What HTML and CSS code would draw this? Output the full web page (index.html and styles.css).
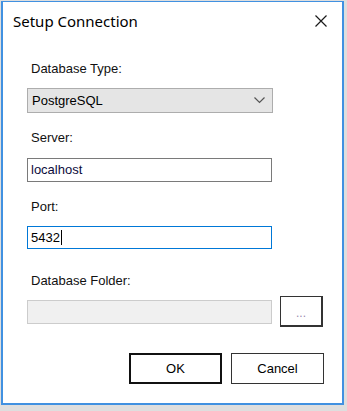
FILE: index.html
```html
<!DOCTYPE html>
<html lang="en">

<head>
    <meta charset="UTF-8">
    <title>Setup Connection</title>
    <link rel="stylesheet" href="styles.css">
</head>

<body>
    <div class="window">
        <div class="titlebar">
            <div class="title">Setup Connection</div>
            <svg class="close" width="12" height="12" viewBox="0 0 12 12">
                <path d="M0.5 0.5 L11.5 11.5 M11.5 0.5 L0.5 11.5" stroke="#1a1a1a" stroke-width="1.2" fill="none"/>
            </svg>
        </div>

        <div class="form">
            <label class="label first">Database Type:</label>
            <div class="combo">
                <span>PostgreSQL</span>
                <svg width="11" height="7" viewBox="0 0 11 7">
                    <path d="M0.5 0.5 L5.5 5.5 L10.5 0.5" stroke="#555" stroke-width="1.2" fill="none"/>
                </svg>
            </div>

            <label class="label">Server:</label>
            <div class="textbox server">localhost</div>

            <label class="label">Port:</label>
            <div class="textbox port">5432<span class="caret"></span></div>

            <label class="label folder-label">Database Folder:</label>
            <div class="folder-row">
                <div class="textbox disabled"></div>
                <button class="browse">...</button>
            </div>

            <div class="actions">
                <button class="button default">OK</button>
                <button class="button">Cancel</button>
            </div>
        </div>
    </div>
</body>

</html>
```

FILE: styles.css
```css
body {
    margin: 0;
    padding: 1px 0 0 1px;
    background-color: #dedede;
    font-family: 'Liberation Sans', Arial, sans-serif;
    font-size: 13px;
    color: #000000;
}

.window {
    width: 339px;
    height: 401px;
    background-color: #ffffff;
    border: 2px solid #4191e1;
    border-top-width: 1px;
}

.titlebar {
    height: 38px;
    display: flex;
    align-items: center;
    justify-content: space-between;
    padding: 0 15px 0 10px;
}

.title {
    font-family: 'Noto Sans', sans-serif;
    font-size: 15px;
    color: #000000;
}

.form {
    display: flex;
    flex-direction: column;
    padding-left: 24px;
}

.label {
    display: block;
    height: 16px;
    line-height: 16px;
    margin-top: 17px;
    padding-left: 4px;
    color: #111111;
}

.label.first {
    margin-top: 21px;
}

.combo {
    height: 23px;
    margin-top: 11px;
    background-color: #e5e5e5;
    border: 1px solid #adadad;
    display: flex;
    align-items: center;
    justify-content: space-between;
    padding: 0 7px 0 4px;
    width: 233px;
}

.textbox {
    width: 240px;
    height: 22px;
    line-height: 22px;
    border: 1px solid #7a7a7a;
    padding-left: 3px;
    color: #0b0b3b;
}

.server {
    margin-top: 12px;
}

.port {
    margin-top: 11px;
    height: 21px;
    line-height: 21px;
    border-color: #0078d7;
    display: flex;
    align-items: center;
    color: #000000;
}

.caret {
    display: inline-block;
    width: 1px;
    height: 15px;
    background-color: #000000;
    margin-left: 1px;
}

.folder-label {
    margin-top: 24px;
}

.folder-row {
    display: flex;
    align-items: center;
    gap: 8px;
    margin-top: 7px;
}

.textbox.disabled {
    background-color: #f0f0f0;
    border-color: #cccccc;
}

.browse {
    width: 43px;
    height: 31px;
    background-color: #ffffff;
    border: 2px solid #333333;
    border-left-width: 1px;
    border-top-width: 1px;
    font-family: 'Liberation Sans', sans-serif;
    font-size: 12px;
    color: #9a8ab0;
    padding: 4px 0 0 0;
}

.actions {
    display: flex;
    justify-content: flex-end;
    gap: 9px;
    margin-top: 26px;
    padding-right: 18px;
}

.button {
    width: 93px;
    height: 31px;
    background-color: #ffffff;
    border: 1px solid #333333;
    font-family: 'Liberation Sans', sans-serif;
    font-size: 13px;
    color: #000000;
}

.button.default {
    border: 2px solid #111111;
}
```
